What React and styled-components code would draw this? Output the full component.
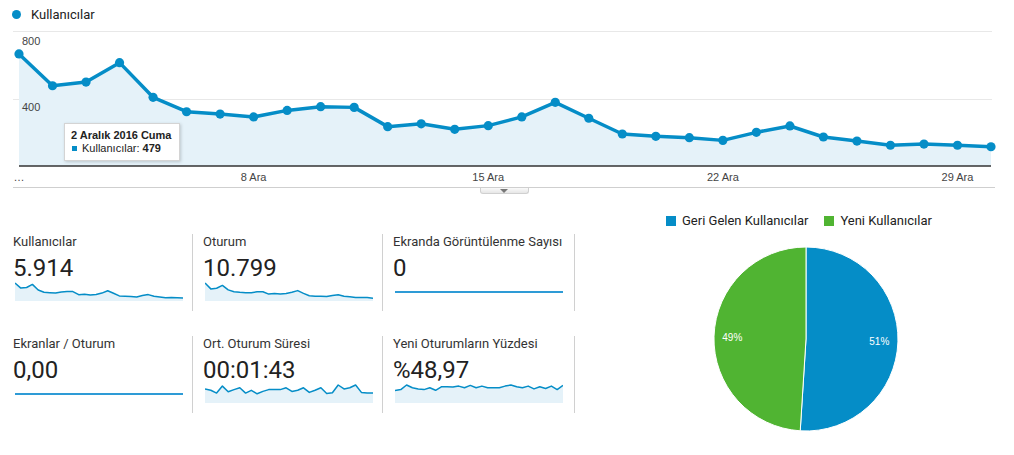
import React from "react";
import styled, { createGlobalStyle } from "styled-components";

const BLUE = "#058dc7";
const GREEN = "#50b432";
const AREA = "#e5f2f9";

// daily users, 1 - 30 Aralık
const users = [
  669, 479, 501, 617, 410, 324, 310, 293, 332, 354, 350, 235, 252, 219, 241,
  293, 380, 285, 191, 177, 169, 153, 201, 239, 173, 149, 124, 131, 124, 115,
];
const sessions = [
  52, 35, 37, 45, 32, 27, 25, 24, 24, 27, 27, 20, 22, 20, 22, 25, 30, 22, 15,
  14, 14, 13, 16, 18, 14, 12, 10, 10, 10, 8,
];
const duration = [
  40, 36, 28, 48, 32, 38, 43, 28, 36, 26, 33, 38, 38, 38, 43, 33, 36, 43, 30,
  36, 43, 27, 29, 51, 40, 43, 51, 30, 28, 28,
];
const newRate = [
  35, 38, 51, 43, 40, 38, 43, 36, 46, 46, 45, 48, 43, 50, 43, 48, 43, 43, 43,
  48, 51, 46, 43, 48, 40, 46, 41, 48, 38, 50,
];

const metrics = [
  { label: "Kullanıcılar", value: "5.914", data: users },
  { label: "Oturum", value: "10.799", data: sessions },
  { label: "Ekranda Görüntülenme Sayısı", value: "0", flat: true },
  { label: "Ekranlar / Oturum", value: "0,00", flat: true },
  { label: "Ort. Oturum Süresi", value: "00:01:43", data: duration },
  { label: "Yeni Oturumların Yüzdesi", value: "%48,97", data: newRate },
];

const GlobalStyle = createGlobalStyle`
  body {
    margin: 0;
    background: #fff;
    font-family: Roboto, "Liberation Sans", Arial, sans-serif;
    color: #222;
  }
`;

function App() {
  return (
    <Page>
      <GlobalStyle />
      <ChartHeader>
        <LegendDot />
        <HeaderLabel>Kullanıcılar</HeaderLabel>
      </ChartHeader>
      <ChartWrap>
        <LineChart />
        <Tooltip>
          <TooltipTitle>2 Aralık 2016 Cuma</TooltipTitle>
          <TooltipRow>
            <TooltipSwatch />
            <span>
              Kullanıcılar: <b>479</b>
            </span>
          </TooltipRow>
        </Tooltip>
      </ChartWrap>
      <AxisRule>
        <ExpandTab>
          <Caret />
        </ExpandTab>
      </AxisRule>

      <Lower>
        <MetricGrid>
          {metrics.map((m) => (
            <Metric key={m.label}>
              <MetricLabel>{m.label}</MetricLabel>
              <MetricValue>{m.value}</MetricValue>
              <Sparkline values={m.data} flat={m.flat} />
            </Metric>
          ))}
        </MetricGrid>

        <PiePanel>
          <PieLegend>
            <PieLegendItem>
              <Swatch color={BLUE} />
              Geri Gelen Kullanıcılar
            </PieLegendItem>
            <PieLegendItem>
              <Swatch color={GREEN} />
              Yeni Kullanıcılar
            </PieLegendItem>
          </PieLegend>
          <PieChart />
        </PiePanel>
      </Lower>
    </Page>
  );
}

export default App;

function LineChart() {
  const x = (i) => 19 + (i * (991 - 19)) / 29;
  const y = (v) => 166 - v * 0.1675;
  const pts = users.map((v, i) => [x(i), y(v)]);
  const line = pts.map((p, i) => (i ? "L" : "M") + p[0] + "," + p[1]).join(" ");
  const area = `${line} L${x(29)},166 L${x(0)},166 Z`;
  const ticks = [
    { i: 0, t: "…" },
    { i: 7, t: "8 Ara" },
    { i: 14, t: "15 Ara" },
    { i: 21, t: "22 Ara" },
    { i: 28, t: "29 Ara" },
  ];

  return (
    <svg width="1014" height="158" viewBox="0 29 1014 158" style={{ display: "block" }}>
      <line x1="13" x2="992" y1="31.5" y2="31.5" stroke="#e8e8e8" />
      <line x1="13" x2="992" y1="99.5" y2="99.5" stroke="#e8e8e8" />
      <path d={area} fill={AREA} />
      <line x1="19" x2="991" y1="166" y2="166" stroke="#333" strokeWidth="1.3" />
      <g fontFamily="'Liberation Sans', Arial, sans-serif" fontSize="11" fill="#444">
        <text x="22" y="44.5">800</text>
        <text x="22" y="111">400</text>
        {ticks.map((t) => (
          <text key={t.t} x={x(t.i)} y="181" textAnchor="middle">
            {t.t}
          </text>
        ))}
      </g>
      <path d={line} fill="none" stroke={BLUE} strokeWidth="3.5" strokeLinejoin="round" />
      {pts.map((p, i) => (
        <circle key={i} cx={p[0]} cy={p[1]} r="4.6" fill={BLUE} />
      ))}
    </svg>
  );
}

function Sparkline({ values, flat }) {
  const w = 168;
  if (flat) {
    return (
      <SparkSvg width={w} height="20">
        <line x1="0" x2={w} y1="10" y2="10" stroke="#2e9bd6" strokeWidth="2" />
      </SparkSvg>
    );
  }
  const max = Math.max(...values);
  const pts = values.map((v, i) => [(i * w) / (values.length - 1), 19 - (v / max) * 18]);
  const line = pts.map((p, i) => (i ? "L" : "M") + p[0].toFixed(1) + "," + p[1].toFixed(1)).join(" ");
  return (
    <SparkSvg width={w} height="20">
      <path d={`${line} L${w},19 L0,19 Z`} fill={AREA} />
      <path d={line} fill="none" stroke={BLUE} strokeWidth="1.5" strokeLinejoin="round" />
    </SparkSvg>
  );
}

function PieChart() {
  const c = 93;
  const r = 92;
  const a = (0.51 * 360 * Math.PI) / 180;
  const ex = (c + r * Math.sin(a)).toFixed(2);
  const ey = (c - r * Math.cos(a)).toFixed(2);
  return (
    <PieSvg width="186" height="186">
      <path d={`M${c},${c} L${c},${c - r} A${r},${r} 0 1 1 ${ex},${ey} Z`} fill={BLUE} stroke="#fff" strokeWidth="1" />
      <path d={`M${c},${c} L${ex},${ey} A${r},${r} 0 0 1 ${c},${c - r} Z`} fill={GREEN} stroke="#fff" strokeWidth="1" />
      <g fontFamily="'Liberation Sans', Arial, sans-serif" fontSize="10" fill="#fff" textAnchor="middle">
        <text x="166.3" y="98.8">51%</text>
        <text x="19.3" y="94.8">49%</text>
      </g>
    </PieSvg>
  );
}

const Page = styled.div`
  width: 1014px;
  height: 455px;
  overflow: hidden;
`;

const ChartHeader = styled.div`
  height: 29px;
  display: flex;
  align-items: center;
  gap: 10px;
  padding-left: 12px;
`;

const LegendDot = styled.span`
  width: 9px;
  height: 9px;
  border-radius: 50%;
  background: ${BLUE};
`;

const HeaderLabel = styled.span`
  font-size: 13px;
  color: #222;
`;

const ChartWrap = styled.div`
  position: relative;
`;

const Tooltip = styled.div`
  position: absolute;
  left: 64px;
  top: 94px;
  width: 116px;
  height: 38px;
  box-sizing: border-box;
  padding: 4px 6px 0;
  background: #fff;
  border: 1px solid #d4d4d4;
  box-shadow: 1px 1px 3px rgba(0, 0, 0, 0.18);
  font-family: "Liberation Sans", Arial, sans-serif;
  font-size: 11px;
  color: #222;
`;

const TooltipTitle = styled.div`
  font-weight: bold;
  line-height: 14px;
`;

const TooltipRow = styled.div`
  display: flex;
  align-items: center;
  line-height: 13px;
`;

const TooltipSwatch = styled.span`
  width: 5px;
  height: 5px;
  background: ${BLUE};
  margin: 0 5px 0 1px;
`;

const AxisRule = styled.div`
  margin: 0 19px 0 13px;
  height: 6px;
  border-top: 1px solid #cfcfcf;
  display: flex;
  justify-content: center;
`;

const ExpandTab = styled.div`
  width: 49px;
  height: 6px;
  box-sizing: border-box;
  border: 1px solid #d0d0d0;
  border-top: none;
  border-radius: 0 0 3px 3px;
  background: linear-gradient(#fafafa, #e6e6e6);
  display: flex;
  justify-content: center;
  padding-top: 1px;
`;

const Caret = styled.span`
  width: 0;
  height: 0;
  border-left: 4px solid transparent;
  border-right: 4px solid transparent;
  border-top: 4px solid #777;
`;

const Lower = styled.div`
  display: flex;
`;

const MetricGrid = styled.div`
  margin: 40px 0 0 3px;
  display: grid;
  grid-template-columns: 190px 190px 192px;
  row-gap: 25px;
  align-content: start;
`;

const Metric = styled.div`
  height: 77px;
  box-sizing: border-box;
  padding: 0 10px;
  border-right: 1px solid #d0d0d0;
`;

const MetricLabel = styled.div`
  font-size: 13px;
  line-height: 16px;
  color: #333;
  white-space: nowrap;
`;

const MetricValue = styled.div`
  margin-top: 4px;
  font-size: 24px;
  line-height: 28px;
  color: #222;
`;

const SparkSvg = styled.svg`
  display: block;
  margin-left: 2px;
`;

const PiePanel = styled.div`
  flex: 1;
  padding-left: 91px;
`;

const PieLegend = styled.div`
  margin-top: 19px;
  display: flex;
  gap: 16px;
`;

const PieLegendItem = styled.div`
  display: flex;
  align-items: center;
  gap: 6px;
  font-size: 13px;
  line-height: 16px;
  color: #222;
`;

const Swatch = styled.span`
  width: 10px;
  height: 10px;
  background: ${(p) => p.color};
`;

const PieSvg = styled.svg`
  display: block;
  margin: 17px 0 0 47px;
`;
